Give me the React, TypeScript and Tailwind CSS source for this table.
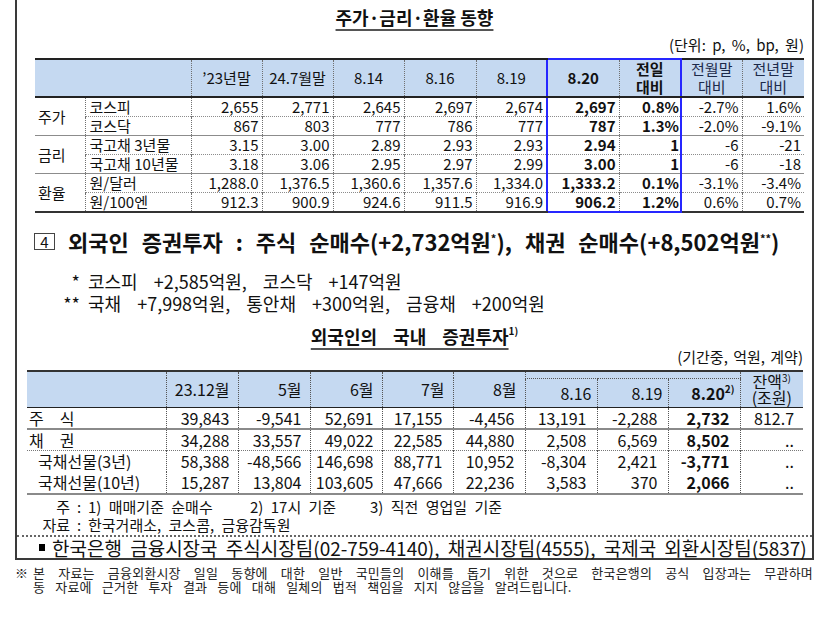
import React from 'react'

// 주가·금리·환율 표 데이터
const MARKET_ROWS = [
  { group: '주가', item: '코스피', vals: ['2,655', '2,771', '2,645', '2,697', '2,674'], today: '2,697', dod: '0.8%', mom: '-2.7%', yoy: '1.6%' },
  { group: '', item: '코스닥', vals: ['867', '803', '777', '786', '777'], today: '787', dod: '1.3%', mom: '-2.0%', yoy: '-9.1%' },
  { group: '금리', item: '국고채 3년물', vals: ['3.15', '3.00', '2.89', '2.93', '2.93'], today: '2.94', dod: '1', mom: '-6', yoy: '-21' },
  { group: '', item: '국고채 10년물', vals: ['3.18', '3.06', '2.95', '2.97', '2.99'], today: '3.00', dod: '1', mom: '-6', yoy: '-18' },
  { group: '환율', item: '원/달러', vals: ['1,288.0', '1,376.5', '1,360.6', '1,357.6', '1,334.0'], today: '1,333.2', dod: '0.1%', mom: '-3.1%', yoy: '-3.4%' },
  { group: '', item: '원/100엔', vals: ['912.3', '900.9', '924.6', '911.5', '916.9'], today: '906.2', dod: '1.2%', mom: '0.6%', yoy: '0.7%' },
]

// 외국인 증권투자 표 데이터
const FOREIGN_ROWS = [
  { label: ['주', '식'], vals: ['39,843', '-9,541', '52,691', '17,155', '-4,456', '13,191', '-2,288'], today: '2,732', bal: '812.7' },
  { label: ['채', '권'], vals: ['34,288', '33,557', '49,022', '22,585', '44,880', '2,508', '6,569'], today: '8,502', bal: '..' },
  { label: ['국채선물(3년)'], vals: ['58,388', '-48,566', '146,698', '88,771', '10,952', '-8,304', '2,421'], today: '-3,771', bal: '..' },
  { label: ['국채선물(10년)'], vals: ['15,287', '13,804', '103,605', '47,666', '22,236', '3,583', '370'], today: '2,066', bal: '..' },
]

function rowTop(i: number) {
  if (i === 0) return ''
  return i % 2 === 0 ? '[border-top:1px_solid_#8c8c8c]' : '[border-top:1px_dotted_#8c8c8c]'
}

function MarketTable() {
  const headTop = '[border-top:2px_solid_#222] [border-bottom:2px_solid_#222]'
  const vline = '[border-left:1px_dotted_#707070]'
  return (
    <table className="w-[769px] table-fixed border-collapse text-[15px] leading-[18px]">
      <colgroup>
        <col className="w-[50px]" />
        <col className="w-[106px]" />
        <col className="w-[71px]" />
        <col className="w-[71px]" />
        <col className="w-[71px]" />
        <col className="w-[72px]" />
        <col className="w-[71px]" />
        <col className="w-[72px]" />
        <col className="w-[62px]" />
        <col className="w-[61px]" />
        <col className="w-[62px]" />
      </colgroup>
      <thead>
        <tr className="h-[37px] bg-[#c5d9f1]">
          <th colSpan={2} className={`p-0 ${headTop}`} />
          {['’23년말', '24.7월말', '8.14', '8.16', '8.19'].map((h) => (
            <th key={h} className={`p-0 font-normal ${headTop} ${vline}`}>
              {h}
            </th>
          ))}
          <th className="p-0 font-bold [border-top:2px_solid_#2626ff] [border-bottom:2px_solid_#222] [border-left:2px_solid_#2626ff]">
            8.20
          </th>
          <th className="p-0 font-bold [border-top:2px_solid_#2626ff] [border-bottom:2px_solid_#222] [border-right:2px_solid_#2626ff] [border-left:1px_dotted_#707070]">
            <div>전일</div>
            <div>대비</div>
          </th>
          <th className={`p-0 font-normal text-[#1c2a4a] ${headTop} ${vline}`}>
            <div>전월말</div>
            <div>대비</div>
          </th>
          <th className={`p-0 font-normal text-[#1c2a4a] ${headTop} ${vline}`}>
            <div>전년말</div>
            <div>대비</div>
          </th>
        </tr>
      </thead>
      <tbody>
        {MARKET_ROWS.map((r, i) => {
          const top = rowTop(i)
          const last = i === MARKET_ROWS.length - 1
          const bottom = last ? '[border-bottom:2px_solid_#333]' : ''
          const blueBottom = last ? '[border-bottom:2px_solid_#2626ff]' : ''
          return (
            <tr key={r.item} className="h-[19px]">
              {r.group && (
                <td rowSpan={2} className={`p-0 pl-[3px] text-left align-middle ${top} ${i === 4 ? '[border-bottom:2px_solid_#333]' : ''}`}>
                  {r.group}
                </td>
              )}
              <td className={`p-0 pl-[4px] text-left whitespace-nowrap ${top} ${bottom} ${vline}`}>{r.item}</td>
              {r.vals.map((v, j) => (
                <td key={j} className={`p-0 pr-[3px] text-right whitespace-nowrap ${top} ${bottom} ${vline}`}>
                  {v}
                </td>
              ))}
              <td className={`p-0 pr-[3px] text-right font-bold ${top} ${blueBottom} [border-left:2px_solid_#2626ff]`}>{r.today}</td>
              <td className={`p-0 pr-[1px] text-right font-bold ${top} ${blueBottom} [border-right:2px_solid_#2626ff] ${vline}`}>{r.dod}</td>
              <td className={`p-0 pr-[3px] text-right ${top} ${bottom} ${vline}`}>{r.mom}</td>
              <td className={`p-0 pr-[3px] text-right ${top} ${bottom} ${vline}`}>{r.yoy}</td>
            </tr>
          )
        })}
      </tbody>
    </table>
  )
}

function ForeignTable() {
  const vline = '[border-left:1px_dotted_#555]'
  const top = '[border-top:2px_solid_#333]'
  const bottom = '[border-bottom:1px_solid_#222]'
  return (
    <table className="w-[776px] table-fixed border-collapse text-[16px] leading-[20px]">
      <colgroup>
        <col className="w-[139px]" />
        <col className="w-[72px]" />
        <col className="w-[72px]" />
        <col className="w-[72px]" />
        <col className="w-[71px]" />
        <col className="w-[72px]" />
        <col className="w-[72px]" />
        <col className="w-[71px]" />
        <col className="w-[72px]" />
        <col className="w-[63px]" />
      </colgroup>
      <thead className="bg-[#c5d9f1]">
        <tr className="h-[7px]">
          <th rowSpan={2} className={`p-0 ${top} ${bottom}`} />
          {['23.12월', '5월', '6월', '7월', '8월'].map((h) => (
            <th key={h} rowSpan={2} className={`p-0 pr-[8px] text-right font-normal ${top} ${bottom} ${vline}`}>
              {h}
            </th>
          ))}
          <th colSpan={3} className={`p-0 ${top} [border-bottom:1px_dotted_#555] ${vline}`} />
          <th rowSpan={2} className={`p-0 text-center font-normal leading-[16px] ${top} ${bottom} ${vline}`}>
            <div className="h-[16px]">
              잔액<sup className="text-[10px] leading-none -top-[6px]">3)</sup>
            </div>
            <div className="h-[16px]">(조원)</div>
          </th>
        </tr>
        <tr className="h-[29px]">
          <th className={`p-0 pr-[5px] text-right font-normal ${bottom} ${vline}`}>8.16</th>
          <th className={`p-0 pr-[5px] text-right font-normal ${bottom} ${vline}`}>8.19</th>
          <th className={`p-0 pr-[5px] text-right font-bold ${bottom} ${vline}`}>
            8.20<sup className="text-[10px] leading-none -top-[7px]">2)</sup>
          </th>
        </tr>
      </thead>
      <tbody>
        {FOREIGN_ROWS.map((r, i) => {
          const rowLine =
            i === 1 ? '[border-top:2px_solid_#8a8a8a]' : i === 2 ? '[border-top:1px_dotted_#777]' : ''
          const endLine = i === 3 ? '[border-bottom:2px_solid_#8a8a8a]' : ''
          const h = i === 0 || i === 3 ? 'h-[22px]' : 'h-[21px]'
          return (
            <tr key={i} className={h}>
              <td className={`p-0 text-left whitespace-nowrap ${rowLine} ${endLine}`}>
                {r.label.length === 2 ? (
                  <span className="pl-[2px]">
                    {r.label[0]}
                    <span className="ml-[16px]">{r.label[1]}</span>
                  </span>
                ) : (
                  <span className="pl-[11px]">{r.label[0]}</span>
                )}
              </td>
              {r.vals.map((v, j) => (
                <td
                  key={j}
                  className={`p-0 text-right whitespace-nowrap ${j < 3 ? 'pr-[8px]' : 'pr-[10px]'} ${rowLine} ${endLine} ${vline}`}
                >
                  {v}
                </td>
              ))}
              <td className={`p-0 pr-[10px] text-right font-bold ${rowLine} ${endLine} ${vline}`}>{r.today}</td>
              <td className={`p-0 pr-[9px] text-right ${rowLine} ${endLine} ${vline}`}>{r.bal}</td>
            </tr>
          )
        })}
      </tbody>
    </table>
  )
}

export default function App() {
  return (
    <div className="w-[819px] h-[622px] overflow-hidden bg-white text-[#111] font-['Noto_Sans_CJK_KR',sans-serif]">
      <div className="ml-[15px] w-[799px] border-x-2 border-b-2 border-[#3a3a3a]">
        {/* 제목 */}
        <div className="h-[36px] pt-[5px] flex justify-center">
          <span className="text-[18px] font-bold leading-[24px] underline decoration-[#555] decoration-2 underline-offset-[4px]">
            주가·금리·환율 동향
          </span>
        </div>

        <div className="ml-[18px] w-[769px]">
          <div className="h-[22px] text-right text-[15px] leading-[18px] [word-spacing:3px]">(단위: p, %, bp, 원)</div>
          <MarketTable />
        </div>

        {/* 외국인 증권투자 */}
        <div className="mt-[18px] ml-[17px] h-[20px] flex items-center">
          <span className="w-[21px] h-[17px] border border-[#444] flex items-center justify-center text-[15px] leading-none">
            4
          </span>
          <span className="ml-[13px] text-[22px] font-bold leading-[20px] whitespace-nowrap [word-spacing:8px]">
            외국인 증권투자 : 주식 순매수(+2,732억원<sup className="text-[11px] -top-[8px]">*</sup>), 채권 순매수(+8,502억원
            <sup className="text-[11px] -top-[8px]">**</sup>)
          </span>
        </div>

        <div className="mt-[19px] ml-[18px] text-[18px] leading-[22px] [word-spacing:12px]">
          <div className="flex">
            <span className="w-[45px] text-right">*</span>
            <span className="ml-[8px]">코스피 +2,585억원, 코스닥 +147억원</span>
          </div>
          <div className="flex">
            <span className="w-[45px] text-right">**</span>
            <span className="ml-[8px]">국채 +7,998억원, 통안채 +300억원, 금융채 +200억원</span>
          </div>
        </div>

        <div className="mt-[10px] h-[24px] flex justify-center items-start">
          <span className="text-[18px] font-bold leading-[24px] underline decoration-[#555] decoration-2 underline-offset-[4px] [word-spacing:12px]">
            외국인의 국내 증권투자
          </span>
          <span className="text-[10px] font-bold leading-[14px]">1)</span>
        </div>
        <div className="h-[18px] pr-[9px] text-right text-[15px] leading-[18px] [word-spacing:2px]">(기간중, 억원, 계약)</div>

        <div className="mt-[4px] ml-[10px]">
          <ForeignTable />
        </div>

        <div className="mt-[3px] text-[15px] leading-[18px] [word-spacing:4px]">
          <div className="flex">
            <span className="w-[53px] text-right">주</span>
            <span className="w-[18px] text-center">:</span>
            <span className="w-[162px]">1) 매매기준 순매수</span>
            <span className="w-[120px]">2) 17시 기준</span>
            <span>3) 직전 영업일 기준</span>
          </div>
          <div className="flex">
            <span className="w-[53px] text-right">자료</span>
            <span className="w-[18px] text-center">:</span>
            <span>한국거래소, 코스콤, 금융감독원</span>
          </div>
        </div>

        <div className="mt-[1px] [border-top:2px_dotted_#666]" />
        <div className="h-[21px] pl-[22px] flex items-center">
          <span className="w-[6px] h-[7px] bg-black" />
          <span className="ml-[7px] text-[19px] leading-[21px] whitespace-nowrap [word-spacing:4px]">
            한국은행 금융시장국 주식시장팀(02-759-4140), 채권시장팀(4555), 국제국 외환시장팀(5837)
          </span>
        </div>
      </div>

      {/* 면책 안내 */}
      <div className="mt-[6px] ml-[15px] w-[798px] flex text-[13px] leading-[14px] text-[#222] tracking-[0.2px]">
        <span className="w-[18px] shrink-0">※</span>
        <div className="flex-1 [word-spacing:7px]">
          <p className="text-justify [text-align-last:justify]">
            본 자료는 금융외환시장 일일 동향에 대한 일반 국민들의 이해를 돕기 위한 것으로 한국은행의 공식 입장과는 무관하며
          </p>
          <p>동 자료에 근거한 투자 결과 등에 대해 일체의 법적 책임을 지지 않음을 알려드립니다.</p>
        </div>
      </div>
    </div>
  )
}
